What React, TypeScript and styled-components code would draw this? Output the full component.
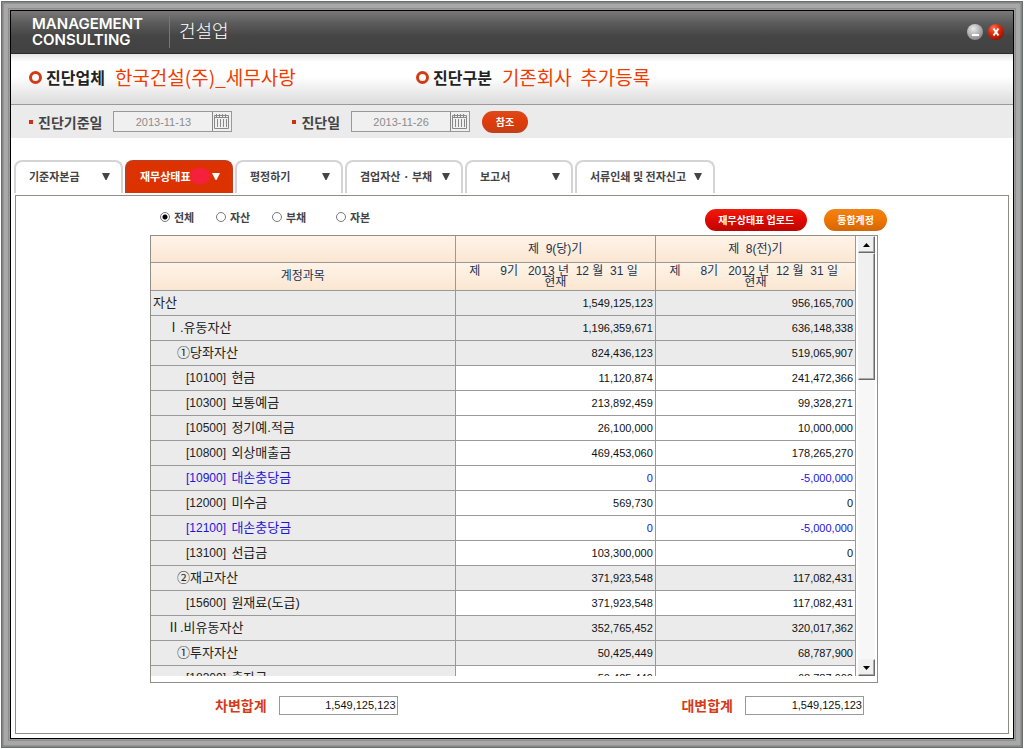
import React, { useState } from "react";
import styled, { createGlobalStyle, css } from "styled-components";

const sans = `"Liberation Sans", "Noto Sans CJK KR", sans-serif`;
const korean = `"Noto Sans CJK KR", "Liberation Sans", sans-serif`;

const GlobalStyle = createGlobalStyle`
  *, *::before, *::after { box-sizing: border-box; }
  body { margin: 0; background: #fff; font-family: ${korean}; color: #333; }
  button, input { font-family: inherit; margin: 0; }
`;

const Frame = styled.div`
  min-height: 100vh;
  padding: 1px 1px 2px;
  display: flex;
`;

const Bevel = styled.div`
  flex: 1;
  display: flex;
  min-width: 0;
  padding: 9px;
  background: #9c9c9c;
  box-shadow: inset 0 0 0 1px #6a706d, inset 0 0 0 2px #858585, inset 0 0 0 3px #949494,
    inset 0 0 0 7px #a8a8a8, inset 0 0 0 8px #8e8e8e;
`;

const Window = styled.main`
  flex: 1;
  min-width: 0;
  display: flex;
  flex-direction: column;
  border: 1px solid #000;
  background: #fff;
`;

const TitleBar = styled.header`
  display: flex;
  align-items: center;
  height: 43px;
  padding: 0 9px 0 21px;
  background: linear-gradient(#787878, #5a5a5a 30%, #454545 60%, #414141);
  border-bottom: 1px solid #2b2b2b;
  color: #fff;
`;

const Brand = styled.div`
  width: 138px;
  font: 600 15px/16px Inter, sans-serif;
  border-right: 1px solid #777;
  margin-right: 9px;
`;

const Industry = styled.h1`
  flex: 1;
  margin: 0;
  padding-bottom: 4px;
  font-size: 18px;
  line-height: 28px;
  font-weight: 300;
`;

const WindowButton = styled.button`
  width: 16px;
  height: 16px;
  margin-left: 5px;
  padding: 0;
  border: 0;
  background: none;
  display: grid;
`;

const Summary = styled.section`
  display: flex;
  align-items: center;
  height: 51px;
  padding: 0 18px 4px;
  background: linear-gradient(#e4e4e4, #fff 16%, #fff 45%, #dedede 96%);
  border-bottom: 1px solid #999;
`;

const SummaryItem = styled.div<{ $width: number }>`
  display: flex;
  align-items: center;
  width: ${(p) => p.$width}px;
  white-space: pre;
`;

const Ring = styled.span`
  width: 13px;
  height: 13px;
  margin-right: 4px;
  border: 3px solid #d23c14;
  border-radius: 50%;
`;

const SummaryLabel = styled.strong`
  margin-right: 10px;
  font-size: 16px;
  line-height: 24px;
  color: #222;
`;

const SummaryValue = styled.span`
  font-size: 19px;
  line-height: 24px;
  font-weight: 400;
  color: #f03c00;
`;

const DateBar = styled.section`
  display: flex;
  align-items: center;
  height: 33px;
  padding: 0 18px;
  background: #ebebeb;
`;

const DateLabel = styled.label`
  display: flex;
  align-items: center;
  font-size: 14px;
  font-weight: 700;
  color: #444;
  &::before {
    content: "";
    width: 4px;
    height: 4px;
    margin-right: 5px;
    background: #cf2f10;
  }
`;

const DateBox = styled.div<{ $gap: number }>`
  display: flex;
  width: 119px;
  height: 21px;
  margin-left: 11px;
  margin-right: ${(p) => p.$gap}px;
  border: 1px solid #999;
  background: #f0f0f0;
`;

const DateInput = styled.input`
  flex: 1;
  min-width: 0;
  padding: 0;
  border: 0;
  background: none;
  text-align: center;
  font: 11px ${sans};
  color: #8c8c8c;
`;

const CalendarButton = styled.button`
  width: 19px;
  padding: 0;
  border: 0;
  background: none;
  display: grid;
`;

const Pill = styled.button<{ $tone: "vermilion" | "red" | "orange" }>`
  height: 22px;
  min-width: 46px;
  padding: 0 13px;
  border: 0;
  border-radius: 11px;
  font-size: 10px;
  line-height: 20px;
  font-weight: 700;
  white-space: nowrap;
  color: #fff;
  background: ${(p) =>
    ({
      vermilion: "linear-gradient(#dc4a1c, #e03a08 50%, #c04018)",
      red: "linear-gradient(#f01c0c, #e00800 50%, #b80800)",
      orange: "linear-gradient(#f08418, #f07400 50%, #d06808)",
    })[p.$tone]};
`;

const Tabs = styled.nav`
  display: flex;
  gap: 2px;
  padding: 22px 3px 0;
`;

const Tab = styled.button<{ $active: boolean; $width: number }>`
  display: flex;
  align-items: center;
  justify-content: space-between;
  width: ${(p) => p.$width}px;
  height: 33px;
  padding: 0 11px 4px 13px;
  border: 2px solid #d4d4d4;
  border-bottom: 0;
  border-radius: 8px 8px 0 0;
  background: #fff;
  font-size: 11px;
  font-weight: 700;
  white-space: nowrap;
  color: #444;
  ${(p) =>
    p.$active &&
    css`
      color: #fff;
      border-color: #c83a18;
      background: radial-gradient(ellipse 12px 10px at 73px 14px, #f4203c 70%, #dc3200);
    `}
`;

const Panel = styled.section`
  flex: 1;
  margin: 2px 4px 4px;
  padding-bottom: 17px;
  border: 1px solid #8f8f88;
`;

const Toolbar = styled.div`
  display: flex;
  align-items: center;
  justify-content: space-between;
  padding: 13px 121px 4px 144px;
`;

const FilterGroup = styled.div`
  display: flex;
  padding-bottom: 6px;
`;

const FilterOption = styled.label<{ $width: number }>`
  display: flex;
  align-items: center;
  gap: 4px;
  width: ${(p) => p.$width}px;
  font-size: 11px;
  line-height: 16px;
  font-weight: 700;
  color: #444;
`;

const Radio = styled.input`
  appearance: none;
  width: 10px;
  height: 10px;
  border: 1px solid #777;
  border-radius: 50%;
  background: #fff;
  &:checked {
    background: radial-gradient(circle, #000 0 2px, #fff 3px);
  }
`;

const Actions = styled.div`
  display: flex;
  gap: 17px;
`;

const Grid = styled.div`
  display: flex;
  margin: 0 130px 0 134px;
  padding-bottom: 6px;
  border: 1px solid #8f8f88;
`;

const Viewport = styled.div`
  flex: 1;
  min-width: 0;
  height: 440px;
  overflow: hidden;
`;

const Table = styled.table`
  width: 100%;
  table-layout: fixed;
  border-collapse: separate;
  border-spacing: 0;
  font-family: ${sans};
`;

const HeadCell = styled.th`
  height: 27px;
  padding: 0;
  border-right: 1px solid #999;
  border-bottom: 1px solid #999;
  background: linear-gradient(#fff4e8, #fbe6d2);
  font-size: 12px;
  line-height: 11px;
  font-weight: 400;
  color: #1c3350;
  white-space: pre;
`;

const PeriodRow = styled.tr`
  height: 28px;
`;

const nameIndent = [2, 16, 26, 35];

const NameCell = styled.th<{ $level: number; $contra?: boolean }>`
  height: 25px;
  padding: 0 0 1px ${(p) => nameIndent[p.$level]}px;
  border-right: 1px solid #999;
  border-bottom: 1px solid #999;
  background: #ebebeb;
  text-align: left;
  font-size: 13px;
  line-height: 20px;
  font-weight: 400;
  white-space: pre;
  color: ${(p) => (p.$contra ? "#1c14d8" : "#222")};
`;

const Code = styled.span`
  margin-right: 2px;
  font-size: 12px;
`;

const AmountCell = styled.td<{ $shaded: boolean; $contra?: boolean }>`
  height: 25px;
  padding: 0 2px 1px 0;
  border-right: 1px solid #999;
  border-bottom: 1px solid #999;
  background: ${(p) => (p.$shaded ? "#ebebeb" : "#fff")};
  text-align: right;
  font-size: 11px;
  line-height: 20px;
  color: ${(p) => (p.$contra ? "#1c14d8" : "#111")};
`;

const ScrollTrack = styled.div`
  display: flex;
  flex-direction: column;
  width: 17px;
  margin: 0 2px;
  background: #f7f7f7;
`;

const raised = css`
  border: 1px solid;
  border-color: #f2f2f2 #6a6a6a #6a6a6a #f2f2f2;
  box-shadow: inset -1px -1px 0 #aaa;
  background: #f0f0f0;
`;

const ScrollButton = styled.button`
  ${raised}
  display: grid;
  place-items: center;
  height: 17px;
  padding: 0;
`;

const Thumb = styled.div`
  ${raised}
  height: 127px;
  margin-bottom: auto;
`;

const Totals = styled.div`
  display: flex;
  justify-content: space-between;
  padding: 11px 144px 0 199px;
`;

const Total = styled.label`
  display: flex;
  align-items: center;
  gap: 12px;
  font-size: 14px;
  line-height: 22px;
  font-weight: 700;
  color: #d63a18;
`;

const TotalInput = styled.input`
  width: 119px;
  height: 19px;
  padding: 0 1px;
  border: 1px solid #999;
  background: #fff;
  text-align: right;
  font: 11px ${sans};
  color: #111;
`;

const CalendarIcon = () => (
  <svg width="19" height="19" viewBox="0 0 19 19" fill="none" stroke="#888" aria-hidden="true">
    <path d="M.5 0v19" />
    <path d="M2.5 3.5h14v13h-14zM2 5.500h15" />
    <path d="M4.500 2v3M7.500 2v3M10.500 2v3M13.500 2v3M5.500 7v8M8.500 7v8M11.500 7v8M14.500 7v8" />
  </svg>
);

const Caret = () => (
  <svg width="8" height="8" viewBox="0 0 8 8" aria-hidden="true">
    <path d="M0 1h8L4.500 8h-1z" fill="currentColor" />
  </svg>
);

const MinimizeIcon = () => (
  <svg width="16" height="16" viewBox="0 0 16 16" aria-hidden="true">
    <defs>
      <radialGradient id="silver" cx=".4" cy=".3" r=".7">
        <stop offset="0" stopColor="#e8e8e8" />
        <stop offset="1" stopColor="#8a8a8a" />
      </radialGradient>
    </defs>
    <circle cx="8" cy="8" r="8" fill="url(#silver)" />
    <path d="M5 11h7" stroke="#fff" strokeWidth="2" />
  </svg>
);

const CloseIcon = () => (
  <svg width="16" height="16" viewBox="0 0 16 16" aria-hidden="true">
    <defs>
      <radialGradient id="ruby" cx=".35" cy=".25" r=".8">
        <stop offset="0" stopColor="#ff7050" />
        <stop offset=".5" stopColor="#d82808" />
        <stop offset="1" stopColor="#981000" />
      </radialGradient>
    </defs>
    <circle cx="8" cy="8" r="8" fill="url(#ruby)" />
    <path d="M5.500 4.500l5 7M10.500 4.500l-5 7" stroke="#fff" strokeWidth="2" />
  </svg>
);

const Arrow = ({ down = false }: { down?: boolean }) => (
  <svg width="7" height="4" viewBox="0 0 7 4" aria-hidden="true">
    <path d={down ? "M0 0h7L3.500 4z" : "M0 4h7L3.500 0z"} fill="#000" />
  </svg>
);

const tabs = [
  { label: "기준자본금", width: 109 },
  { label: "재무상태표", width: 108 },
  { label: "평정하기", width: 108 },
  { label: "겸업자산 · 부채", width: 118 },
  { label: "보고서", width: 108 },
  { label: "서류인쇄 및 전자신고", width: 140 },
];

const filters = [
  { label: "전체", width: 56 },
  { label: "자산", width: 56 },
  { label: "부채", width: 64 },
  { label: "자본", width: 56 },
];

type Row = {
  level: number;
  code?: string;
  name: string;
  current: string;
  previous: string;
  contra?: boolean;
  shaded?: boolean;
};

const rows: Row[] = [
  { level: 0, name: "자산", current: "1,549,125,123", previous: "956,165,700", shaded: true },
  { level: 1, name: "Ⅰ.유동자산", current: "1,196,359,671", previous: "636,148,338", shaded: true },
  { level: 2, name: "①당좌자산", current: "824,436,123", previous: "519,065,907", shaded: true },
  { level: 3, code: "10100", name: "현금", current: "11,120,874", previous: "241,472,366" },
  { level: 3, code: "10300", name: "보통예금", current: "213,892,459", previous: "99,328,271" },
  { level: 3, code: "10500", name: "정기예.적금", current: "26,100,000", previous: "10,000,000" },
  { level: 3, code: "10800", name: "외상매출금", current: "469,453,060", previous: "178,265,270" },
  { level: 3, code: "10900", name: "대손충당금", current: "0", previous: "-5,000,000", contra: true },
  { level: 3, code: "12000", name: "미수금", current: "569,730", previous: "0" },
  { level: 3, code: "12100", name: "대손충당금", current: "0", previous: "-5,000,000", contra: true },
  { level: 3, code: "13100", name: "선급금", current: "103,300,000", previous: "0" },
  { level: 2, name: "②재고자산", current: "371,923,548", previous: "117,082,431", shaded: true },
  { level: 3, code: "15600", name: "원재료(도급)", current: "371,923,548", previous: "117,082,431" },
  { level: 1, name: "Ⅱ.비유동자산", current: "352,765,452", previous: "320,017,362", shaded: true },
  { level: 2, name: "①투자자산", current: "50,425,449", previous: "68,787,900", shaded: true },
  { level: 3, code: "18300", name: "출자금", current: "50,425,449", previous: "68,787,900" },
];

export default function App() {
  const [tab, setTab] = useState(1);
  const [filter, setFilter] = useState(0);

  return (
    <Frame>
      <GlobalStyle />
      <Bevel>
        <Window>
          <TitleBar>
            <Brand>
              MANAGEMENT
              <br />
              CONSULTING
            </Brand>
            <Industry>건설업</Industry>
            <WindowButton aria-label="최소화">
              <MinimizeIcon />
            </WindowButton>
            <WindowButton aria-label="닫기">
              <CloseIcon />
            </WindowButton>
          </TitleBar>

          <Summary>
            <SummaryItem $width={387}>
              <Ring />
              <SummaryLabel>진단업체</SummaryLabel>
              <SummaryValue>한국건설(주)_세무사랑</SummaryValue>
            </SummaryItem>
            <SummaryItem $width={387}>
              <Ring />
              <SummaryLabel>진단구분</SummaryLabel>
              <SummaryValue>{"기존회사  추가등록"}</SummaryValue>
            </SummaryItem>
          </Summary>

          <DateBar>
            <DateLabel htmlFor="base-date">진단기준일</DateLabel>
            <DateBox $gap={60}>
              <DateInput id="base-date" defaultValue="2013-11-13" />
              <CalendarButton aria-label="진단기준일 선택">
                <CalendarIcon />
              </CalendarButton>
            </DateBox>
            <DateLabel htmlFor="check-date">진단일</DateLabel>
            <DateBox $gap={12}>
              <DateInput id="check-date" defaultValue="2013-11-26" />
              <CalendarButton aria-label="진단일 선택">
                <CalendarIcon />
              </CalendarButton>
            </DateBox>
            <Pill $tone="vermilion">참조</Pill>
          </DateBar>

          <Tabs>
            {tabs.map((t, i) => (
              <Tab key={t.label} $active={i === tab} $width={t.width} onClick={() => setTab(i)}>
                {t.label}
                <Caret />
              </Tab>
            ))}
          </Tabs>

          <Panel>
            <Toolbar>
              <FilterGroup>
                {filters.map((f, i) => (
                  <FilterOption key={f.label} $width={f.width}>
                    <Radio type="radio" name="filter" checked={i === filter} onChange={() => setFilter(i)} />
                    {f.label}
                  </FilterOption>
                ))}
              </FilterGroup>
              <Actions>
                <Pill $tone="red">재무상태표 업로드</Pill>
                <Pill $tone="orange">통합계정</Pill>
              </Actions>
            </Toolbar>

            <Grid>
              <Viewport>
                <Table>
                  <colgroup>
                    <col />
                    <col style={{ width: "28.4%" }} />
                    <col style={{ width: "28.4%" }} />
                  </colgroup>
                  <thead>
                    <tr>
                      <HeadCell />
                      <HeadCell>{"제  9(당)기"}</HeadCell>
                      <HeadCell>{"제  8(전)기"}</HeadCell>
                    </tr>
                    <PeriodRow>
                      <HeadCell>계정과목</HeadCell>
                      <HeadCell>{"제      9기   2013 년  12 월  31 일 \n현재"}</HeadCell>
                      <HeadCell>{"제      8기   2012 년  12 월  31 일 \n현재"}</HeadCell>
                    </PeriodRow>
                  </thead>
                  <tbody>
                    {rows.map((r, i) => (
                      <tr key={i}>
                        <NameCell scope="row" $level={r.level} $contra={r.contra}>
                          {r.code && <Code>[{r.code}] </Code>}
                          {r.name}
                        </NameCell>
                        <AmountCell $shaded={!!r.shaded} $contra={r.contra}>
                          {r.current}
                        </AmountCell>
                        <AmountCell $shaded={!!r.shaded} $contra={r.contra}>
                          {r.previous}
                        </AmountCell>
                      </tr>
                    ))}
                  </tbody>
                </Table>
              </Viewport>
              <ScrollTrack>
                <ScrollButton aria-label="위로">
                  <Arrow />
                </ScrollButton>
                <Thumb />
                <ScrollButton aria-label="아래로">
                  <Arrow down />
                </ScrollButton>
              </ScrollTrack>
            </Grid>

            <Totals>
              <Total>
                차변합계
                <TotalInput defaultValue="1,549,125,123" />
              </Total>
              <Total>
                대변합계
                <TotalInput defaultValue="1,549,125,123" />
              </Total>
            </Totals>
          </Panel>
        </Window>
      </Bevel>
    </Frame>
  );
}
